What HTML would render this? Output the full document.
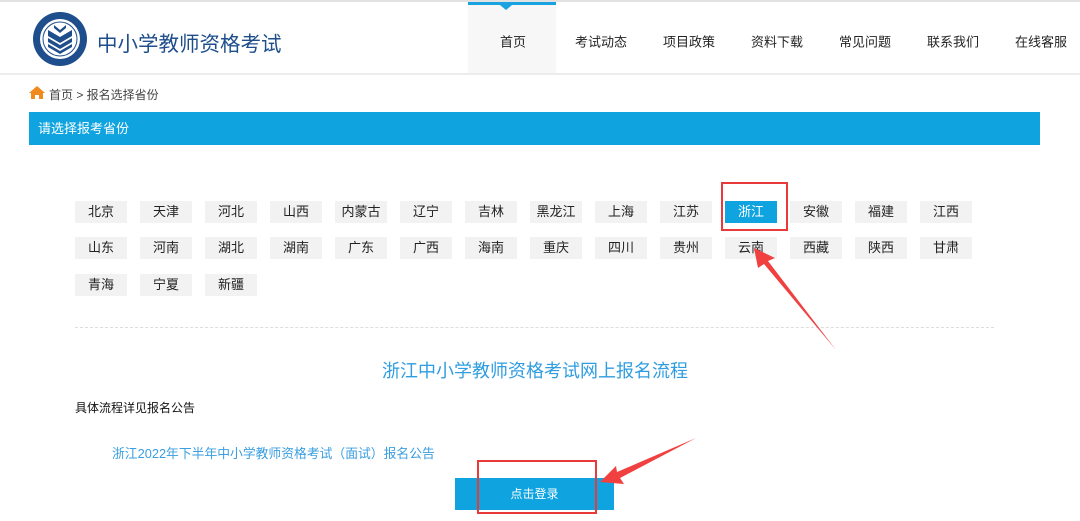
<!DOCTYPE html>
<html><head><meta charset="utf-8"><style>
*{margin:0;padding:0;box-sizing:border-box}
body{width:1080px;height:521px;overflow:hidden;background:#fff;font-family:"Liberation Sans","Noto Sans CJK SC",sans-serif;position:relative;color:#333}
.abs{position:absolute}
.nav{position:absolute;top:41px;font-size:13px;color:#222;transform:translate(-50%,-50%);white-space:nowrap}
.b{position:absolute;width:52px;height:22px;background:#f2f2f2;font-size:13px;line-height:22px;text-align:center;color:#222}
</style></head><body>
<div class="abs" style="left:0;top:0;width:1080px;height:2px;background:#e2e2e2"></div>
<div class="abs" style="left:0;top:73px;width:1080px;height:2px;background:#ececec"></div>
<div class="abs" style="left:468px;top:2px;width:88px;height:71px;background:#f7f7f7"></div>
<div class="abs" style="left:468px;top:2px;width:88px;height:3px;background:#1aa3e0"></div>
<div class="abs" style="left:500px;top:5px;width:0;height:0;border-left:6px solid transparent;border-right:6px solid transparent;border-top:5px solid #1aa3e0"></div>
<svg class="abs" style="left:32px;top:11px" width="56" height="56" viewBox="0 0 56 56">
<circle cx="28" cy="28" r="27" fill="#1e4e8c"/>
<circle cx="28" cy="28" r="20" fill="#fff"/>
<circle cx="28" cy="28" r="17" fill="#fff" stroke="#1e4e8c" stroke-width="1"/>
<path d="M16 19 L28 26 L40 19 L40 25 L28 32 L16 25Z M16 27 L28 34 L40 27 L40 31 L28 38 L16 31Z M16 33 L28 40 L40 33 L40 36 L28 43 L16 36Z" fill="#1e4e8c"/>
<path d="M22 17 L28 22 L34 17 L34 14 L28 19 L22 14Z" fill="#1e4e8c"/>
</svg>
<div class="abs" style="left:97px;top:27px;font-size:20.5px;color:#1e4e8c">中小学教师资格考试</div>
<div class="nav" style="left:513px">首页</div>
<div class="nav" style="left:601px">考试动态</div>
<div class="nav" style="left:689px">项目政策</div>
<div class="nav" style="left:777px">资料下载</div>
<div class="nav" style="left:865px">常见问题</div>
<div class="nav" style="left:953px">联系我们</div>
<div class="nav" style="left:1041px">在线客服</div>
<svg class="abs" style="left:29px;top:86px" width="16" height="14" viewBox="0 0 16 14"><path d="M8 0 L16 7 L14 7 L14 13 L10 13 L10 9 L6 9 L6 13 L2 13 L2 7 L0 7Z" fill="#f08a1c"/></svg>
<div class="abs" style="left:49px;top:86px;font-size:12px;color:#444">首页 &gt; 报名选择省份</div>
<div class="abs" style="left:29px;top:112px;width:1011px;height:33px;background:#0fa4e0;color:#fff;font-size:13px;line-height:33px;padding-left:9px">请选择报考省份</div>
<div class="b" style="left:75px;top:201px">北京</div><div class="b" style="left:140px;top:201px">天津</div><div class="b" style="left:205px;top:201px">河北</div><div class="b" style="left:270px;top:201px">山西</div><div class="b" style="left:335px;top:201px">内蒙古</div><div class="b" style="left:400px;top:201px">辽宁</div><div class="b" style="left:465px;top:201px">吉林</div><div class="b" style="left:530px;top:201px">黑龙江</div><div class="b" style="left:595px;top:201px">上海</div><div class="b" style="left:660px;top:201px">江苏</div><div class="b" style="left:725px;top:201px;background:#0fa4e0;color:#fff">浙江</div><div class="b" style="left:790px;top:201px">安徽</div><div class="b" style="left:855px;top:201px">福建</div><div class="b" style="left:920px;top:201px">江西</div>
<div class="b" style="left:75px;top:237px">山东</div><div class="b" style="left:140px;top:237px">河南</div><div class="b" style="left:205px;top:237px">湖北</div><div class="b" style="left:270px;top:237px">湖南</div><div class="b" style="left:335px;top:237px">广东</div><div class="b" style="left:400px;top:237px">广西</div><div class="b" style="left:465px;top:237px">海南</div><div class="b" style="left:530px;top:237px">重庆</div><div class="b" style="left:595px;top:237px">四川</div><div class="b" style="left:660px;top:237px">贵州</div><div class="b" style="left:725px;top:237px">云南</div><div class="b" style="left:790px;top:237px">西藏</div><div class="b" style="left:855px;top:237px">陕西</div><div class="b" style="left:920px;top:237px">甘肃</div>
<div class="b" style="left:75px;top:274px">青海</div><div class="b" style="left:140px;top:274px">宁夏</div><div class="b" style="left:205px;top:274px">新疆</div>
<div class="abs" style="left:721px;top:182px;width:67px;height:49px;border:2px solid #e83a3a"></div>
<div class="abs" style="left:75px;top:327px;width:919px;height:0;border-top:1px dashed #ddd"></div>
<div class="abs" style="left:0;top:357px;width:1070px;text-align:center;font-size:18px;color:#2f9de0">浙江中小学教师资格考试网上报名流程</div>
<div class="abs" style="left:75px;top:399px;font-size:12px;color:#111">具体流程详见报名公告</div>
<div class="abs" style="left:112px;top:443px;font-size:12.8px;color:#3a9ee0">浙江2022年下半年中小学教师资格考试（面试）报名公告</div>
<div class="abs" style="left:455px;top:478px;width:159px;height:32px;background:#0fa4e0;color:#fff;font-size:12px;line-height:32px;text-align:center">点击登录</div>
<div class="abs" style="left:477px;top:460px;width:120px;height:54px;border:2px solid #e83a3a"></div>
<svg class="abs" style="left:0;top:0" width="1080" height="521">
<path d="M754 248 L775 258 L768 261 L836 350 L764 264 L758 268Z" fill="#f04040"/>
<path d="M600 482 L616 466 L617 472 L696 438 L620 478 L624 484Z" fill="#f04040"/>
</svg>
</body></html>
